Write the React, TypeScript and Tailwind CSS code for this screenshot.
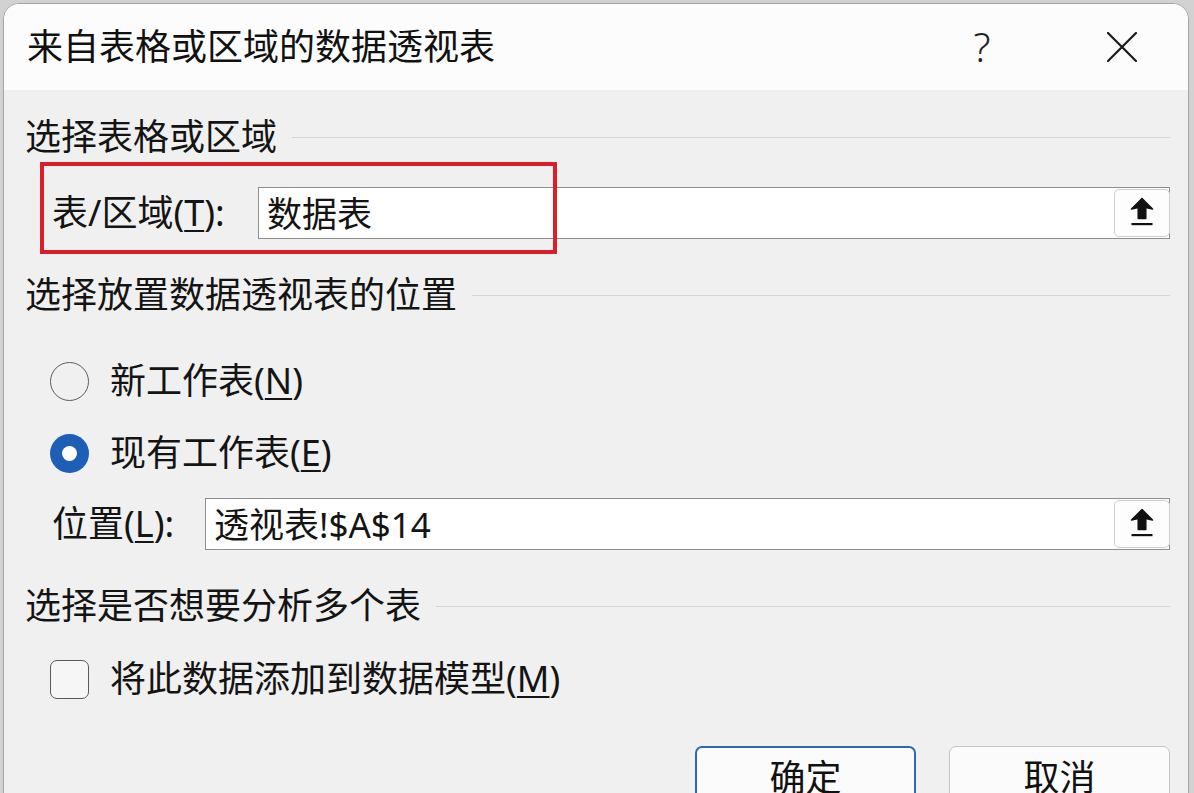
import React from "react"

const font = { fontFamily: '"Noto Sans", "Noto Sans CJK SC", sans-serif' }

function UploadButton() {
  return (
    <div className="h-full w-[56px] -mr-px flex items-center justify-center rounded-[5px] border border-[#cfcfcf] bg-[#fdfdfd]">
      <svg width="24" height="30" viewBox="0 0 24 30" className="mt-[-3px]">
        <path
          d="M12 1.5 L22.5 12 L15.8 10.5 L15.8 21.5 L8.2 21.5 L8.2 10.5 L1.5 12 Z"
          fill="#111"
          stroke="#111"
          strokeWidth="1.5"
          strokeLinejoin="round"
        />
        <rect x="1.5" y="26" width="21" height="2.2" fill="#111" />
      </svg>
    </div>
  )
}

function Heading({ text }: { text: string }) {
  return (
    <div className="h-[40px] flex items-center">
      <span className="text-[36px] leading-none text-[#141414] whitespace-nowrap">{text}</span>
      <div className="ml-[15px] flex-1 h-px bg-[#d6d6d6]" />
    </div>
  )
}

function Field({ value }: { value: string }) {
  return (
    <div className="flex-1 h-full flex items-stretch border border-[#8e8e8e] bg-white">
      <div className="flex-1 flex items-center pl-[8px] text-[35px] leading-none text-[#141414]">{value}</div>
      <div className="py-px flex">
        <UploadButton />
      </div>
    </div>
  )
}

export default function App() {
  return (
    <div className="w-full h-[793px] overflow-hidden bg-[#d2d2d2] pl-[3px] pt-[3px]" style={font}>
      <div className="w-[1186px] h-[800px] rounded-t-[16px] overflow-hidden border border-[#a3a3a3] bg-[#f0f0f0]">
        {/* title bar */}
        <div className="h-[86px] bg-[#fcfcfc] flex items-center pl-[23px] pr-[51px]">
          <span className="text-[36px] leading-none text-[#111]">来自表格或区域的数据透视表</span>
          <div className="ml-auto flex items-center">
            <span className="w-[40px] text-center text-[40px] font-light leading-none text-[#222]">?</span>
            <svg width="30" height="30" viewBox="0 0 30 30" className="ml-[105px]">
              <path d="M1 1 L29 29 M29 1 L1 29" stroke="#1a1a1a" strokeWidth="2.2" strokeLinecap="round" />
            </svg>
          </div>
        </div>

        {/* body */}
        <div className="pl-[21px] pr-[18px] pt-[27px] text-[#141414]">
          <Heading text="选择表格或区域" />

          <div className="relative mt-[30px] h-[52px] flex items-center">
            <div className="w-[233px] pl-[27px] text-[36px] leading-none whitespace-nowrap">
              表/区域(<span className="underline underline-offset-[4px] decoration-2">T</span>):
            </div>
            <Field value="数据表" />
            {/* red annotation box */}
            <div className="absolute left-[15px] top-[-25px] w-[517px] h-[92px] border-[4px] border-[#d8202b]" />
          </div>

          <div className="mt-[36px]">
            <Heading text="选择放置数据透视表的位置" />
          </div>

          <div className="mt-[46px] h-[40px] flex items-center pl-[25px]">
            <div className="w-[39px] h-[39px] rounded-full border-[1.5px] border-[#5c5c5c]" />
            <span className="ml-[21px] text-[36px] leading-none">
              新工作表(<span className="underline underline-offset-[4px] decoration-2">N</span>)
            </span>
          </div>

          <div className="mt-[32px] h-[40px] flex items-center pl-[25px]">
            <div className="w-[39px] h-[39px] rounded-full bg-[#1c5fb4] flex items-center justify-center">
              <div className="w-[15px] h-[15px] rounded-full bg-white" />
            </div>
            <span className="ml-[21px] text-[36px] leading-none">
              现有工作表(<span className="underline underline-offset-[4px] decoration-2">E</span>)
            </span>
          </div>

          <div className="mt-[25px] h-[52px] flex items-center">
            <div className="w-[180px] pl-[27px] text-[36px] leading-none whitespace-nowrap">
              位置(<span className="underline underline-offset-[4px] decoration-2">L</span>):
            </div>
            <Field value="透视表!$A$14" />
          </div>

          <div className="mt-[36px]">
            <Heading text="选择是否想要分析多个表" />
          </div>

          <div className="mt-[33px] h-[40px] flex items-center pl-[25px]">
            <div className="w-[39px] h-[39px] rounded-[7px] border-[1.5px] border-[#5a5a5a] bg-[#f6f6f6]" />
            <span className="ml-[21px] text-[36px] leading-none">
              将此数据添加到数据模型(<span className="underline underline-offset-[4px] decoration-2">M</span>)
            </span>
          </div>

          <div className="mt-[47px] flex justify-end gap-[33px]">
            <button className="w-[221px] h-[64px] rounded-[7px] border-2 border-[#2c69b3] bg-[#fbfbfb] text-[36px] leading-none text-[#111]">
              确定
            </button>
            <button className="w-[221px] h-[64px] rounded-[7px] border border-[#c4c4c4] bg-[#fbfbfb] text-[36px] leading-none text-[#111]">
              取消
            </button>
          </div>
        </div>
      </div>
    </div>
  )
}
